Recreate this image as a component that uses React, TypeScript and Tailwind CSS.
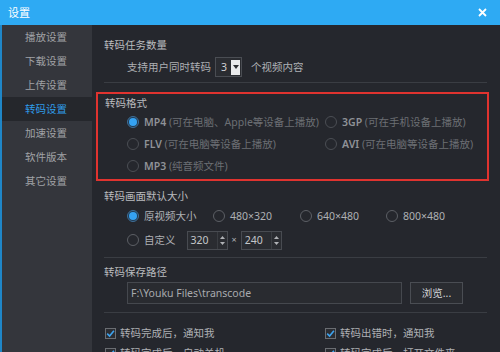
import React from "react";

const Radio = ({ on = false, dim = false }: { on?: boolean; dim?: boolean }) => (
  <span
    className={`flex h-[12px] w-[12px] shrink-0 items-center justify-center rounded-full border ${
      on ? "border-[#3f6f98] bg-[#1f3a52]" : dim ? "border-[#4b4e54]" : "border-[#5c5f65]"
    }`}
  >
    {on && <span className="h-[8px] w-[8px] rounded-full bg-[#35a2f2]" />}
  </span>
);

const Check = () => (
  <span className="flex h-[11px] w-[11px] shrink-0 items-center justify-center border border-[#6a6d72] bg-[#2b2d32]">
    <svg width="9" height="9" viewBox="0 0 9 9">
      <path d="M1.2 4.6 L3.6 7 L7.9 1.8" stroke="#3ea3ef" strokeWidth="1.6" fill="none" />
    </svg>
  </span>
);

const Spin = ({ v }: { v: string }) => (
  <div className="flex h-[19px] w-[41px] items-center border border-[#484b51] bg-[#2a2c31]">
    <span className="flex-1 pl-[3px] text-[#c4c6c9]">{v}</span>
    <div className="flex h-full w-[10px] flex-col items-center justify-center gap-[3px] border-l border-[#3a3d42]">
      <svg width="5" height="3" viewBox="0 0 5 3">
        <path d="M0 3 L2.5 0 L5 3 Z" fill="#b0b2b6" />
      </svg>
      <svg width="5" height="3" viewBox="0 0 5 3">
        <path d="M0 0 L2.5 3 L5 0 Z" fill="#b0b2b6" />
      </svg>
    </div>
  </div>
);

const Sep = () => <div className="mr-[13px] ml-[12px] h-[1px] bg-[#3a3d43]" />;

export default function App() {
  const side = ["播放设置", "下载设置", "上传设置", "转码设置", "加速设置", "软件版本", "其它设置"];
  return (
    <div className="flex h-[352px] w-[500px] flex-col overflow-hidden bg-[#25272d] font-['Noto_Sans','Noto_Sans_CJK_SC',sans-serif] text-[10.5px] leading-[16px] text-[#aeb0b4]">
      <div className="flex h-[25px] shrink-0 items-center justify-between bg-[#2eaaf3] pr-[13px] pl-[8px]">
        <span className="text-[11px] text-white">设置</span>
        <svg width="9" height="9" viewBox="0 0 9 9">
          <path d="M1 1 L8 8 M8 1 L1 8" stroke="#ffffff" strokeWidth="1.8" />
        </svg>
      </div>
      <div className="flex flex-1 border-l-2 border-[#1f86c7]">
        <div className="w-[90px] shrink-0 bg-[#34363c]">
          {side.map((s) => (
            <div
              key={s}
              className={`flex h-[24px] items-center pl-[23px] ${
                s === "转码设置" ? "bg-[#25272c] text-[#2f9de9]" : "text-[#a0a2a6]"
              }`}
            >
              {s}
            </div>
          ))}
        </div>
        <div className="flex flex-1 flex-col">
          <div className="mt-[12px] pl-[12px] text-[#babcbf]">转码任务数量</div>
          <div className="mt-[4px] flex h-[20px] items-center pl-[35px]">
            <span>支持用户同时转码</span>
            <div className="ml-[4px] flex h-[20px] w-[27px] items-center border border-[#4a4d53] bg-[#2a2c31] pr-[1px]">
              <span className="flex-1 pl-[5px] text-[#d0d2d5]">3</span>
              <span className="flex h-[15px] w-[9px] items-center justify-center bg-[#e8e9eb]">
                <svg width="6" height="4" viewBox="0 0 6 4">
                  <path d="M0 0 L3 4 L6 0 Z" fill="#2a2c31" />
                </svg>
              </span>
            </div>
            <span className="ml-[9px]">个视频内容</span>
          </div>
          <div className="mt-[5px]">
            <Sep />
          </div>
          <div className="mt-[9px] mr-[11px] ml-[4px] border-2 border-[#e0332f] pt-[1px] pb-[2px] pl-[7px]">
            <div className="text-[#babcbf]">转码格式</div>
            <div className="grid grid-cols-[198px_1fr] pl-[22px]">
              <div className="flex h-[22px] items-center gap-[5px]">
                <Radio on />
                <span className="text-[#8f9297]">
                  <span className="font-semibold">MP4</span> <span className="text-[#6c6f74]">(可在电脑、Apple等设备上播放)</span>
                </span>
              </div>
              <div className="flex h-[22px] items-center gap-[5px]">
                <Radio dim />
                <span className="text-[#8f9297]">
                  <span className="font-semibold">3GP</span> <span className="text-[#6c6f74]">(可在手机设备上播放)</span>
                </span>
              </div>
              <div className="flex h-[22px] items-center gap-[5px]">
                <Radio dim />
                <span className="text-[#8f9297]">
                  <span className="font-semibold">FLV</span> <span className="text-[#6c6f74]">(可在电脑等设备上播放)</span>
                </span>
              </div>
              <div className="flex h-[22px] items-center gap-[5px]">
                <Radio dim />
                <span className="text-[#8f9297]">
                  <span className="font-semibold">AVI</span> <span className="text-[#6c6f74]">(可在电脑等设备上播放)</span>
                </span>
              </div>
              <div className="flex h-[22px] items-center gap-[5px]">
                <Radio dim />
                <span className="text-[#8f9297]">
                  <span className="font-semibold">MP3</span> <span className="text-[#6c6f74]">(纯音频文件)</span>
                </span>
              </div>
            </div>
          </div>
          <div className="mt-[7px] pl-[12px] text-[#babcbf]">转码画面默认大小</div>
          <div className="flex h-[24px] items-center pl-[35px]">
            <div className="flex w-[86px] items-center gap-[5px]">
              <Radio on />
              <span>原视频大小</span>
            </div>
            <div className="flex w-[87px] items-center gap-[5px]">
              <Radio />
              <span>480×320</span>
            </div>
            <div className="flex w-[86px] items-center gap-[5px]">
              <Radio />
              <span>640×480</span>
            </div>
            <div className="flex items-center gap-[5px]">
              <Radio />
              <span>800×480</span>
            </div>
          </div>
          <div className="flex h-[24px] items-center pl-[35px]">
            <Radio />
            <span className="ml-[5px]">自定义</span>
            <div className="ml-[11px]">
              <Spin v="320" />
            </div>
            <span className="mx-[4px] text-[9px]">×</span>
            <Spin v="240" />
          </div>
          <div className="mt-[5px]">
            <Sep />
          </div>
          <div className="mt-[6px] pl-[12px] text-[#babcbf]">转码保存路径</div>
          <div className="mt-[2px] flex items-center pl-[35px]">
            <div className="flex h-[22px] w-[275px] items-center border border-[#45484e] bg-[#292b30] pl-[3px] text-[#a8aaae]">
              F:\Youku Files\transcode
            </div>
            <div className="ml-[8px] flex h-[22px] w-[53px] items-center justify-center border border-[#4a4d53] bg-[#2a2c31] text-[#d3d5d8]">
              浏览...
            </div>
          </div>
          <div className="mt-[8px]">
            <Sep />
          </div>
          <div className="mt-[12px] flex h-[16px] items-center pl-[13px]">
            <div className="flex w-[220px] items-center gap-[4px]">
              <Check />
              <span>转码完成后，通知我</span>
            </div>
            <div className="flex items-center gap-[4px]">
              <Check />
              <span>转码出错时，通知我</span>
            </div>
          </div>
          <div className="mt-[4px] flex h-[16px] items-center pl-[13px]">
            <div className="flex w-[220px] items-center gap-[4px]">
              <Check />
              <span>转码完成后，自动关机</span>
            </div>
            <div className="flex items-center gap-[4px]">
              <Check />
              <span>转码完成后，打开文件夹</span>
            </div>
          </div>
        </div>
      </div>
    </div>
  );
}
